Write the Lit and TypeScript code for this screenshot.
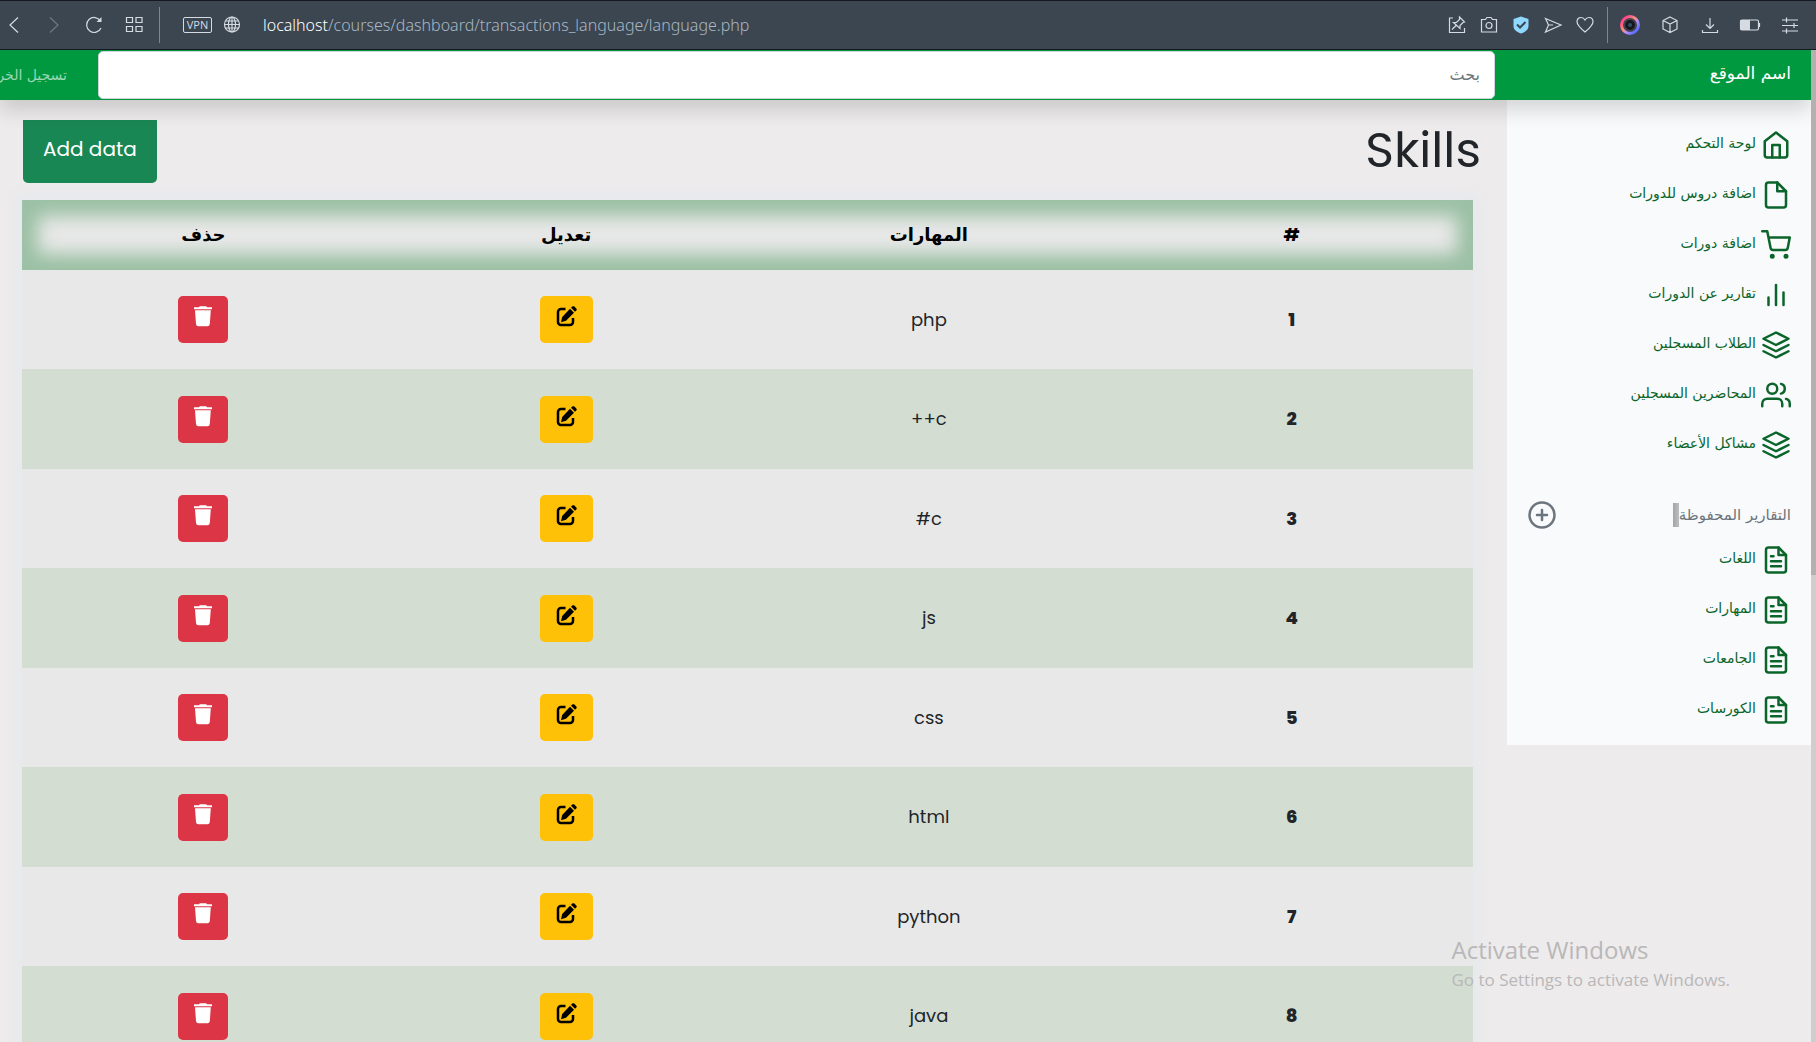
import { LitElement, html, css, svg } from "lit";
import { customElement, property } from "lit/decorators.js";

const feather: Record<string, unknown> = {
  home: svg`<path d="M3 9l9-7 9 7v11a2 2 0 0 1-2 2H5a2 2 0 0 1-2-2z"/><path d="M9 22V12h6v10"/>`,
  file: svg`<path d="M13 2H6a2 2 0 0 0-2 2v16a2 2 0 0 0 2 2h12a2 2 0 0 0 2-2V9z"/><path d="M13 2v7h7"/>`,
  cart: svg`<circle cx="9" cy="21" r="1"/><circle cx="20" cy="21" r="1"/><path d="M1 1h4l2.68 13.39a2 2 0 0 0 2 1.61h9.72a2 2 0 0 0 2-1.61L23 6H6"/>`,
  chart: svg`<path d="M18 20V10M12 20V4M6 20v-6"/>`,
  layers: svg`<path d="M12 2L2 7l10 5 10-5-10-5zM2 17l10 5 10-5M2 12l10 5 10-5"/>`,
  users: svg`<path d="M17 21v-2a4 4 0 0 0-4-4H5a4 4 0 0 0-4 4v2"/><circle cx="9" cy="7" r="4"/><path d="M23 21v-2a4 4 0 0 0-3-3.87M16 3.13a4 4 0 0 1 0 7.75"/>`,
  text: svg`<path d="M14 2H6a2 2 0 0 0-2 2v16a2 2 0 0 0 2 2h12a2 2 0 0 0 2-2V8z"/><path d="M14 2v6h6M16 13H8M16 17H8M10 9H8"/>`,
  plus: svg`<circle cx="12" cy="12" r="10"/><path d="M12 8v8M8 12h8"/>`,
};

const chrome: Record<string, unknown> = {
  back: svg`<path d="M14 2.500L6 10l8 7.500"/>`,
  forward: svg`<path d="M6 2.500L14 10l-8 7.500"/>`,
  reload: svg`<path d="M16.500 6A7.500 7.500 0 1 0 17 13" /><path d="M17.500 2v5h-5z" fill="currentColor" stroke="none"/>`,
  grid: svg`<path d="M2.500 2.500h6v5h-6zM12 2.500h6v5h-6zM2.500 11.500h6v5h-6zM12 11.500h6v5h-6z"/>`,
  globe: svg`<circle cx="10" cy="9.500" r="7.500"/><ellipse cx="10" cy="9.500" rx="3.500" ry="7.500"/><path d="M3.500 6h13M3.500 13h13M10 2v15M2.500 9.500h15"/>`,
  pin: svg`<path d="M6 3H2.500v14.500h15V13"/><path d="M12.500 2l5 5-1.500.5-3 3v3L6.500 7.500h3l3-3zM9 10.500L5 14.500"/>`,
  camera: svg`<path d="M2.500 4.500h4L8 2.500h4l1.500 2h4v12.500h-15z"/><circle cx="10" cy="10.500" r="3"/>`,
  shield: svg`<path d="M10 1.500l7.500 2.500v7c0 4-3.500 6-7.500 7.500C6 17 2.500 15 2.500 11V4z" fill="#8fd8ff" stroke="none"/><path d="M6 9.500l3 3L14.500 7" stroke="#3b4651" stroke-width="2"/>`,
  send: svg`<path d="M2.500 3.500L18 10 2.500 17l3-7zM5.500 10H10"/>`,
  heart: svg`<path d="M10 17C4 12 2 9.500 2 6.700 2 4.200 3.800 2.500 6 2.500c1.800 0 3.200 1 4 2.500.8-1.500 2.200-2.500 4-2.500 2.200 0 4 1.700 4 4.200C18 9.500 16 12 10 17z"/>`,
  ring: svg`<defs><linearGradient id="g" x1="0" y1="0" x2="1" y2="1"><stop offset="0.1" stop-color="#ff3d8b"/><stop offset="0.45" stop-color="#ff8f7a"/><stop offset="0.6" stop-color="#b98cff"/><stop offset="0.9" stop-color="#4f6bff"/></linearGradient></defs><circle cx="10" cy="10" r="8.500" stroke="url(#g)" stroke-width="3"/><circle cx="10" cy="10" r="5.500" fill="#17181d" stroke="#4b4450"/><circle cx="10" cy="10" r="2" fill="#2f5168" stroke="none"/>`,
  cube: svg`<path d="M10 2l7 3.500v8.500L10 17.500 3 14V5.500zM3 5.500L10 9l7-3.500M10 9v8.500"/>`,
  download: svg`<path d="M10 3v10.500M6 9.500l4 4 4-4M2.500 15v2.500h15V15"/>`,
  battery: svg`<rect x="0.500" y="5" width="18" height="10" rx="1.500"/><rect x="0.500" y="5" width="9.500" height="10" fill="currentColor" stroke="none"/><path d="M19.500 8v4"/>`,
  sliders: svg`<path d="M2 5h16M2 10.500h16M2 16h16M6.500 2.500v5M14 8v5M6.500 13.500v5"/>`,
};

@customElement("nav-icon")
class NavIcon extends LitElement {
  static styles = css`
    :host { display: block; flex: none; }
    .art { display: block; width: 30px; height: 30px; }
  `;
  @property() name = "";
  render() {
    return html`<svg class="art" viewBox="0 0 24 24" fill="none" stroke="currentColor" stroke-width="2" stroke-linecap="round" stroke-linejoin="round" aria-hidden="true">${feather[this.name]}</svg>`;
  }
}

@customElement("browser-bar")
class BrowserBar extends LitElement {
  static styles = css`
    :host {
      display: flex;
      align-items: center;
      box-sizing: border-box;
      height: 50px;
      padding: 0 16px 0 4px;
      direction: ltr;
      background: #3b4651;
      border-top: 1px solid #16181f;
      border-bottom: 1px solid #16181f;
      color: #d5dbe1;
      font-family: "Noto Sans", "Open Sans", sans-serif;
    }
    .group { display: flex; align-items: center; gap: 20px; }
    .tight { gap: 12px; }
    .tool {
      display: block;
      width: 20px;
      height: 20px;
      padding: 0;
      border: 0;
      background: none;
      color: inherit;
    }
    .tool.dim { color: #6d7883; }
    .art { display: block; width: 20px; height: 20px; overflow: visible; }
    .rule { width: 1px; height: 36px; margin: 0 12px; background: #7d8791; }
    .rule.first { margin: 0 23px 0 15px; }
    .vpn {
      box-sizing: border-box;
      width: 29px;
      height: 16px;
      margin-right: 10px;
      padding: 0;
      border: 1px solid #d5dbe1;
      border-radius: 2px;
      background: none;
      color: inherit;
      font: 11px/14px "Open Sans", sans-serif;
    }
    .url {
      flex: 1;
      margin-left: 21px;
      color: #aab6c2;
      font-size: 16px;
      font-weight: 300;
      line-height: 22px;
      white-space: nowrap;
      overflow: hidden;
    }
    .host { color: #fff; }
  `;
  tool(name: string, label: string, dim = false) {
    return html`<button class="tool ${dim ? "dim" : ""}" aria-label=${label}>
      <svg class="art" viewBox="0 0 20 20" fill="none" stroke="currentColor" stroke-width="1.200">${chrome[name]}</svg>
    </button>`;
  }
  render() {
    return html`
      <div class="group">
        ${this.tool("back", "Back")} ${this.tool("forward", "Forward", true)}
        ${this.tool("reload", "Reload")} ${this.tool("grid", "Tabs")}
      </div>
      <span class="rule first"></span>
      <button class="vpn">VPN</button>
      ${this.tool("globe", "Site information")}
      <div class="url"><span class="host">localhost</span>/courses/dashboard/transactions_language/language.php</div>
      <div class="group tight">
        ${this.tool("pin", "Edit")} ${this.tool("camera", "Snapshot")}
        ${this.tool("shield", "Blocker")} ${this.tool("send", "Send")}
        ${this.tool("heart", "Favourite")}
      </div>
      <span class="rule"></span>
      <div class="group">
        ${this.tool("ring", "Player")} ${this.tool("cube", "Extensions")}
        ${this.tool("download", "Downloads")} ${this.tool("battery", "Battery")}
        ${this.tool("sliders", "Settings")}
      </div>
    `;
  }
}

@customElement("side-nav")
class SideNav extends LitElement {
  static styles = css`
    :host {
      display: block;
      box-sizing: border-box;
      padding: 20px 20px 10px;
      background: #f8fafc;
      color: #0b652a;
      font-family: "DejaVu Sans", sans-serif;
    }
    .list { margin: 0; padding: 0; list-style: none; }
    .link {
      display: flex;
      align-items: center;
      gap: 5px;
      height: 50px;
      color: inherit;
      text-decoration: none;
      font-size: 14px;
      line-height: 20px;
      white-space: nowrap;
    }
    .label { padding-bottom: 4px; }
    .saved {
      display: flex;
      align-items: center;
      justify-content: space-between;
      margin: 30px 0 5px;
      color: #6c757d;
    }
    .title { display: flex; align-items: center; margin: 0; font-size: 15px; line-height: 24px; font-weight: 400; }
    .mark { width: 6px; height: 24px; background: linear-gradient(90deg, #a3a5a6, #bcbebf); }
    .add { padding: 0; border: 0; background: none; color: inherit; }
  `;
  main = [
    ["home", "لوحة التحكم"],
    ["file", "اضافة دروس للدورات"],
    ["cart", "اضافة دورات"],
    ["chart", "تقارير عن الدورات"],
    ["layers", "الطلاب المسجلين"],
    ["users", "المحاضرين المسجلين"],
    ["layers", "مشاكل الأعضاء"],
  ];
  reports = ["اللغات", "المهارات", "الجامعات", "الكورسات"];
  item(icon: string, label: string) {
    return html`<li><a class="link" href="#"><nav-icon name=${icon}></nav-icon><span class="label">${label}</span></a></li>`;
  }
  render() {
    return html`
      <ul class="list">${this.main.map(([i, l]) => this.item(i, l))}</ul>
      <div class="saved">
        <h6 class="title">التقارير المحفوظة<span class="mark"></span></h6>
        <button class="add" aria-label="اضافة"><nav-icon name="plus"></nav-icon></button>
      </div>
      <ul class="list">${this.reports.map((l) => this.item("text", l))}</ul>
    `;
  }
}

@customElement("skills-table")
class SkillsTable extends LitElement {
  static styles = css`
    :host { display: block; font-family: Poppins, Inter, "DejaVu Sans", sans-serif; }
    .table {
      width: 100%;
      table-layout: fixed;
      border-collapse: collapse;
      background: #e8e8e8;
      box-shadow: 0 0 10px 5px rgba(228, 232, 238, 0.8);
      color: #212529;
      font-size: 18px;
      line-height: 28px;
      text-align: center;
    }
    .head { height: 70px; box-shadow: inset 0 0 18px 16px #9bc0a4; color: #000; }
    .row { height: 99px; }
    .row:nth-child(even) { height: 100px; background: #d3ddd1; }
    th, td { padding: 0; vertical-align: middle; }
    th { font-weight: 700; }
    .row th { font-weight: 800; }
    .btn {
      display: inline-block;
      height: 47px;
      padding: 10px 16px 16px;
      border: 0;
      border-radius: 5px;
      vertical-align: middle;
    }
    .remove { background: #dc3545; color: #fff; }
    .edit { background: #ffc107; color: #000; }
    .art { display: block; height: 21px; }
    .remove .art { width: 18px; }
    .edit .art { width: 21px; }
  `;
  skills = ["php", "c++", "c#", "js", "css", "html", "python", "java"];
  render() {
    return html`<table class="table">
      <thead>
        <tr class="head">
          <th scope="col">#</th>
          <th scope="col">المهارات</th>
          <th scope="col">تعديل</th>
          <th scope="col">حذف</th>
        </tr>
      </thead>
      <tbody>
        ${this.skills.map(
          (s, i) => html`<tr class="row">
            <th scope="row">${i + 1}</th>
            <td>${s}</td>
            <td>
              <button class="btn edit" aria-label="تعديل">
                <svg class="art" viewBox="0 0 21 21">
                  <path d="M9.500 3H5a3 3 0 0 0-3 3v10a3 3 0 0 0 3 3h9a3 3 0 0 0 3-3v-4" fill="none" stroke="currentColor" stroke-width="2.500"/>
                  <path d="M14 2.800l4 4-8 8-5 1.500L6.200 11zM15 1.800L16.300.6c.6-.6 1.500-.6 2.100 0l1.900 1.900c.6.6.6 1.500 0 2.100L19 5.800z" fill="currentColor"/>
                </svg>
              </button>
            </td>
            <td>
              <button class="btn remove" aria-label="حذف">
                <svg class="art" viewBox="0 0 18 21" fill="currentColor">
                  <path d="M0 1.300h5l.8-1.100h6.400l.8 1.100h5v2H0zM1 4.300h15.800l-1 13.700a2.500 2.500 0 0 1-2.500 2.300H4.500A2.500 2.500 0 0 1 2 18z"/>
                </svg>
              </button>
            </td>
          </tr>`
        )}
      </tbody>
    </table>`;
  }
}

@customElement("app-root")
class AppRoot extends LitElement {
  static styles = css`
    :host {
      display: flex;
      flex-direction: column;
      position: relative;
      height: 100vh;
      overflow: hidden;
      direction: rtl;
      background: #edebec;
    }
    .view { display: flex; flex: 1; min-height: 0; direction: ltr; }
    .page { flex: 1; min-width: 0; direction: rtl; overflow: hidden; }
    .scroll { width: 5px; padding-bottom: 2px; background: #cfcdcd; }
    .thumb { width: 5px; height: 53%; background: #b3b0b0; }
    .topbar {
      display: flex;
      align-items: center;
      position: relative;
      z-index: 1;
      height: 50px;
      background: #009940;
      box-shadow: 0 10px 20px rgba(0, 0, 0, 0.15);
      font-family: "DejaVu Sans", sans-serif;
    }
    .brand {
      box-sizing: border-box;
      width: 316px;
      padding: 0 20px 4px;
      color: #fff;
      font-size: 17px;
      line-height: 28px;
      text-decoration: none;
    }
    .search {
      box-sizing: border-box;
      flex: 1;
      min-width: 0;
      height: 48px;
      padding: 0 14px 2px;
      border: 1px solid #ced4da;
      border-radius: 5px;
      background: #fff;
      font: 16px/24px "DejaVu Sans", sans-serif;
    }
    .search::placeholder { color: #6c757d; opacity: 1; }
    .exit {
      box-sizing: border-box;
      width: 98px;
      padding-right: 31px;
      overflow: hidden;
      color: rgba(255, 255, 255, 0.6);
      font-size: 14px;
      line-height: 24px;
      text-decoration: none;
      white-space: nowrap;
    }
    .body { display: flex; align-items: flex-start; }
    .nav { flex: none; width: 304px; }
    .content { flex: 1; min-width: 0; }
    .intro {
      display: flex;
      align-items: flex-start;
      justify-content: space-between;
      padding: 20px 26px 17px 23px;
      font-family: Poppins, Inter, sans-serif;
    }
    .heading { margin: 0; color: #212529; font-size: 49px; line-height: 60px; font-weight: 400; }
    .create {
      height: 63px;
      padding: 0 20px 5px;
      border: 0;
      border-radius: 0 0 5px 5px;
      background: #198754;
      color: #fff;
      font: 400 20px/30px Poppins, Inter, sans-serif;
    }
    .grid { margin: 0 34px 0 22px; }
    .notice {
      position: absolute;
      right: 86px;
      bottom: 49px;
      direction: ltr;
      color: #b9b7b8;
      font-family: "Open Sans", sans-serif;
      pointer-events: none;
    }
    .line { margin: 0; font-size: 17px; line-height: 26px; white-space: nowrap; }
    .line.big { font-size: 24px; line-height: 34px; }
  `;
  render() {
    return html`
      <browser-bar></browser-bar>
      <div class="view">
        <div class="page">
          <header class="topbar">
            <a class="brand" href="#">اسم الموقع</a>
            <input class="search" type="text" placeholder="بحث" aria-label="بحث" />
            <a class="exit" href="#">تسجيل الخروج</a>
          </header>
          <div class="body">
            <side-nav class="nav"></side-nav>
            <main class="content">
              <div class="intro">
                <h1 class="heading">Skills</h1>
                <button class="create">Add data</button>
              </div>
              <skills-table class="grid"></skills-table>
            </main>
          </div>
        </div>
        <div class="scroll"><div class="thumb"></div></div>
      </div>
      <div class="notice">
        <p class="line big">Activate Windows</p>
        <p class="line">Go to Settings to activate Windows.</p>
      </div>
    `;
  }
}
